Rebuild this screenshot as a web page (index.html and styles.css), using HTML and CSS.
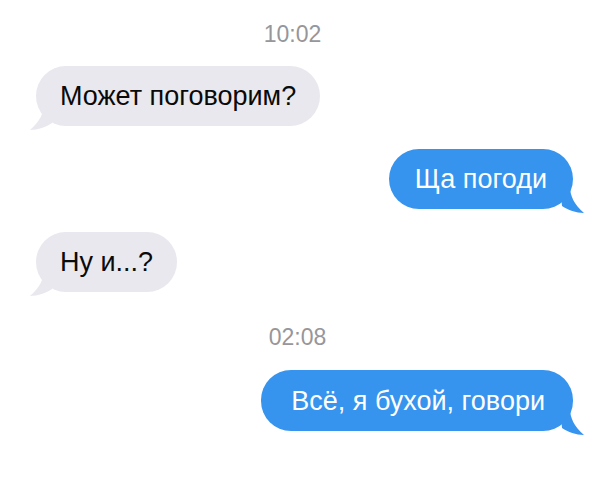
FILE: index.html
```html
<!DOCTYPE html>
<html lang="ru">
<head>
<meta charset="utf-8">
<link rel="stylesheet" href="styles.css">
</head>
<body>
<div class="chat">
  <div class="time time-first">10:02</div>
  <div class="row row-in">
    <div class="bubble in">Может поговорим?
      <svg class="tail tail-in" width="24" height="28" viewBox="0 0 24 28"><path d="M14 0 C14 10 10 18 0 27 C8 27 16 24 22 20 L24 0 Z" fill="#e8e8ee"/></svg>
    </div>
  </div>
  <div class="row row-out">
    <div class="bubble out">Ща погоди
      <svg class="tail tail-out" width="24" height="28" viewBox="0 0 24 28"><path d="M10 0 C10 10 14 18 24 27 C16 27 8 24 2 20 L0 0 Z" fill="#3694ee"/></svg>
    </div>
  </div>
  <div class="row row-in">
    <div class="bubble in">Ну и...?
      <svg class="tail tail-in" width="24" height="28" viewBox="0 0 24 28"><path d="M14 0 C14 10 10 18 0 27 C8 27 16 24 22 20 L24 0 Z" fill="#e8e8ee"/></svg>
    </div>
  </div>
  <div class="time time-second">02:08</div>
  <div class="row row-out">
    <div class="bubble out wide">Всё, я бухой, говори
      <svg class="tail tail-out" width="24" height="28" viewBox="0 0 24 28"><path d="M10 0 C10 10 14 18 24 27 C16 27 8 24 2 20 L0 0 Z" fill="#3694ee"/></svg>
    </div>
  </div>
</div>
</body>
</html>
```

FILE: styles.css
```css
html, body {
  margin: 0;
  padding: 0;
  background: #ffffff;
}

body {
  width: 604px;
  height: 500px;
  overflow: hidden;
  font-family: "Liberation Sans", Arial, sans-serif;
}

.chat {
  display: flex;
  flex-direction: column;
  padding: 21px 31px 0 36px;
}

.time {
  text-align: center;
  color: #96969b;
  font-size: 23px;
  line-height: 26px;
}

.time-first {
  padding-right: 24px;
  margin-bottom: 19px;
}

.time-second {
  padding-right: 14px;
  margin-top: 32px;
  margin-bottom: 20px;
}

.row {
  display: flex;
}

.row + .row {
  margin-top: 23px;
}

.row-in {
  justify-content: flex-start;
}

.row-out {
  justify-content: flex-end;
}

.bubble {
  position: relative;
  font-size: 27px;
  line-height: 30px;
  padding: 15px 24px;
  border-radius: 30px;
  white-space: nowrap;
}

.bubble.in {
  background: #e8e8ee;
  color: #0a0a0a;
}

.bubble.out {
  background: #3694ee;
  color: #ffffff;
  padding: 15px 26px;
}

.bubble.wide {
  padding: 16px 28px 15px 30px;
}

.tail {
  position: absolute;
  bottom: -5px;
  display: block;
}

.tail-in {
  left: -6px;
}

.tail-out {
  right: -11px;
}
```
